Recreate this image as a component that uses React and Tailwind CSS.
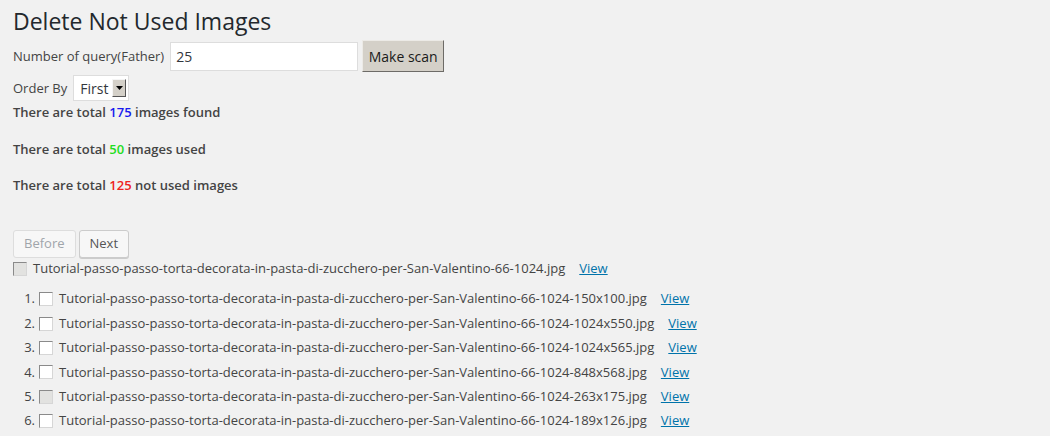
import React from "react";

const base = "Tutorial-passo-passo-torta-decorata-in-pasta-di-zucchero-per-San-Valentino-66-1024";
const items = [
  { n: "150x100", dis: false },
  { n: "1024x550", dis: false },
  { n: "1024x565", dis: false },
  { n: "848x568", dis: false },
  { n: "263x175", dis: true },
  { n: "189x126", dis: false },
];

function Box({ dis }) {
  return (
    <span
      className={
        "inline-block w-[14px] h-[14px] border border-t-[#8a8a8a] border-l-[#8a8a8a] border-r-[#d6d6d6] border-b-[#d6d6d6] shrink-0 " +
        (dis ? "bg-[#e2e2e0]" : "bg-white")
      }
    />
  );
}

export default function App() {
  return (
    <div className="w-[1050px] h-[436px] overflow-hidden bg-[#f1f1f1] text-[#444] text-[13px] px-[13px]" style={{ fontFamily: '"Open Sans", sans-serif' }}>
      <h2 className="text-[23px] leading-[29px] text-[#23282d] font-normal pt-[7px]">Delete Not Used Images</h2>
      <div className="flex items-center mt-[4px] h-[32px]">
        <span className="leading-[20px]">Number of query(Father)</span>
        <div className="ml-[6px] w-[188px] h-[29px] bg-white border border-[#ddd] flex items-center px-[5px] text-[14px] text-[#32373c]">25</div>
        <div className="ml-[4px] w-[82px] h-[32px] bg-[#d4d0c8] border border-t-[#eceae6] border-l-[#eceae6] border-r-[#6d6b67] border-b-[#6d6b67] flex items-center justify-center text-[14px] text-[#1a1a1a]">Make scan</div>
      </div>
      <div className="flex items-center mt-[3px] h-[26px]">
        <span className="leading-[20px]">Order By</span>
        <div className="ml-[6px] w-[56px] h-[26px] bg-white border border-[#ddd] flex items-center pl-[6px] pr-[2px] text-[14px] text-[#32373c]">
          <span>First</span>
          <span className="ml-auto w-[14px] h-[18px] bg-[#d4d0c8] border border-t-[#f5f5f5] border-l-[#f5f5f5] border-r-[#555] border-b-[#555] flex items-center justify-center">
            <svg width="7" height="4" viewBox="0 0 7 4"><path d="M0 0h7L3.5 4z" fill="#000" /></svg>
          </span>
        </div>
      </div>
      <div className="font-semibold leading-[20px]">
        <p className="mt-[1px]">There are total <span className="text-[#1a1aee]">175</span> images found</p>
        <p className="mt-[17px]">There are total <span className="text-[#22dd22]">50</span> images used</p>
        <p className="mt-[16px]">There are total <span className="text-[#ee2222]">125</span> not used images</p>
      </div>
      <div className="flex gap-[3px] mt-[35px]">
        <div className="h-[28px] px-[10px] rounded-[3px] border border-[#ddd] bg-[#f7f7f7] text-[#a0a5aa] flex items-center">Before</div>
        <div className="h-[28px] px-[10px] rounded-[3px] border border-[#ccc] bg-[#f7f7f7] text-[#555] flex items-center shadow-[0_1px_0_#ccc]">Next</div>
      </div>
      <div className="flex items-center mt-[1px] h-[20px]">
        <Box dis />
        <span className="ml-[6px]">{base}.jpg</span>
        <a className="ml-[14px] text-[#0073aa] underline">View</a>
      </div>
      <ol className="mt-[8px] pl-[8px]">
        {items.map((it, i) => (
          <li key={i} className="flex items-center h-[24.4px]">
            <span className="w-[18px] text-right pr-[4px]">{i + 1}.</span>
            <Box dis={it.dis} />
            <span className="ml-[6px]">{base}-{it.n}.jpg</span>
            <a className="ml-[14px] text-[#0073aa] underline">View</a>
          </li>
        ))}
      </ol>
    </div>
  );
}
